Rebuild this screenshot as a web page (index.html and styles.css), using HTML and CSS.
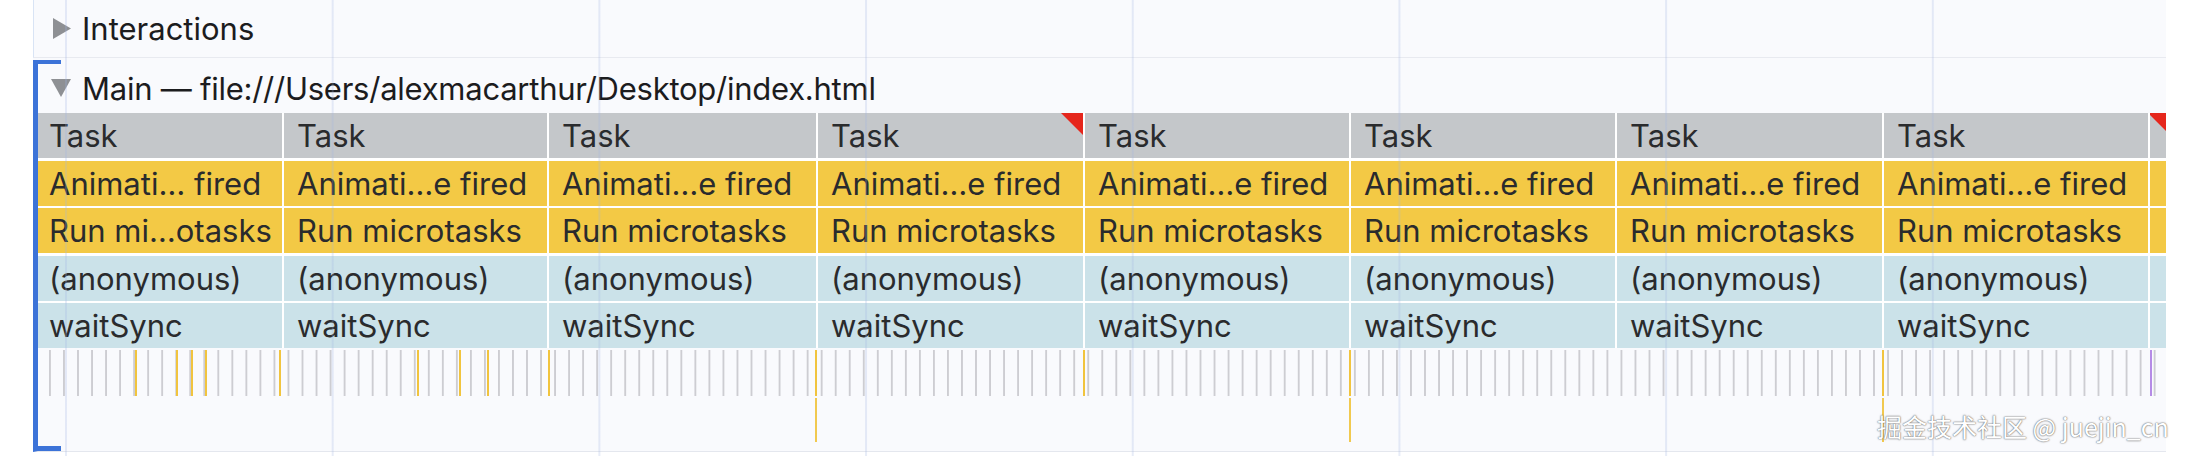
FILE: index.html
```html
<!DOCTYPE html>
<html lang="en">
<head>
    <meta charset="UTF-8">
    <title>Performance - Main thread</title>
    <link rel="stylesheet" href="styles.css">
</head>
<body>
    <div class="timeline">
        <!-- Collapsed track -->
        <div class="track-collapsed">
            <svg class="arrow" width="18" height="21" viewBox="0 0 18 21"><path d="M0 0 L18 10.5 L0 21 Z" fill="#8e9094"/></svg>
            <span class="track-title">Interactions</span>
        </div>

        <!-- Main thread track -->
        <div class="track-main">
            <div class="track-header">
                <svg class="arrow" width="20" height="18" viewBox="0 0 20 18"><path d="M0 0 L20 0 L10 18 Z" fill="#8e9094"/></svg>
                <span class="track-title url">Main — file:///Users/alexmacarthur/Desktop/index.html</span>
            </div>

            <div class="flame">
                <!-- Task row -->
                <div class="cell task first">Task</div>
                <div class="cell task">Task</div>
                <div class="cell task">Task</div>
                <div class="cell task flag">Task</div>
                <div class="cell task">Task</div>
                <div class="cell task">Task</div>
                <div class="cell task">Task</div>
                <div class="cell task">Task</div>
                <div class="cell task flag small"></div>

                <!-- Animation frame row -->
                <div class="cell anim first">Animati… fired</div>
                <div class="cell anim">Animati…e fired</div>
                <div class="cell anim">Animati…e fired</div>
                <div class="cell anim">Animati…e fired</div>
                <div class="cell anim">Animati…e fired</div>
                <div class="cell anim">Animati…e fired</div>
                <div class="cell anim">Animati…e fired</div>
                <div class="cell anim">Animati…e fired</div>
                <div class="cell anim"></div>

                <!-- Microtasks row -->
                <div class="cell anim first">Run mi…otasks</div>
                <div class="cell anim">Run microtasks</div>
                <div class="cell anim">Run microtasks</div>
                <div class="cell anim">Run microtasks</div>
                <div class="cell anim">Run microtasks</div>
                <div class="cell anim">Run microtasks</div>
                <div class="cell anim">Run microtasks</div>
                <div class="cell anim">Run microtasks</div>
                <div class="cell anim"></div>

                <!-- JS rows -->
                <div class="cell script first">(anonymous)</div>
                <div class="cell script">(anonymous)</div>
                <div class="cell script">(anonymous)</div>
                <div class="cell script">(anonymous)</div>
                <div class="cell script">(anonymous)</div>
                <div class="cell script">(anonymous)</div>
                <div class="cell script">(anonymous)</div>
                <div class="cell script">(anonymous)</div>
                <div class="cell script"></div>

                <div class="cell script first">waitSync</div>
                <div class="cell script">waitSync</div>
                <div class="cell script">waitSync</div>
                <div class="cell script">waitSync</div>
                <div class="cell script">waitSync</div>
                <div class="cell script">waitSync</div>
                <div class="cell script">waitSync</div>
                <div class="cell script">waitSync</div>
                <div class="cell script"></div>
            </div>

            <!-- Tiny tasks, yellow ones are frames -->
            <div class="ticks">
                <span class="tick" style="left: 97px"></span>
                <span class="tick" style="left: 138px"></span>
                <span class="tick" style="left: 153px"></span>
                <span class="tick" style="left: 167px"></span>
                <span class="tick" style="left: 241px"></span>
                <span class="tick" style="left: 379px"></span>
                <span class="tick" style="left: 421px"></span>
                <span class="tick" style="left: 449px"></span>
                <span class="tick" style="left: 510px"></span>
                <span class="tick" style="left: 777px"></span>
                <span class="tick" style="left: 1045px"></span>
                <span class="tick" style="left: 1311px"></span>
                <span class="tick" style="left: 1844px"></span>
                <span class="tick purple" style="left: 2112px"></span>
            </div>

            <div class="markers">
                <span class="marker" style="left: 777px"></span>
                <span class="marker" style="left: 1311px"></span>
                <span class="marker" style="left: 1844px"></span>
            </div>
        </div>
    </div>

    <div class="grid-overlay"></div>
    <div class="watermark">掘金技术社区 @ juejin_cn</div>
</body>
</html>
```

FILE: styles.css
```css
/* General Styles */
body {
    margin: 0;
    width: 2188px;
    height: 456px;
    overflow: hidden;
    position: relative;
    background-color: #ffffff;
    font-family: Inter, "Noto Sans", sans-serif;
    color: #1c1c1e;
}

/* Timeline panel */
.timeline {
    margin-left: 33px;
    width: 2133px;
    background-color: #f9fafd;
}

.track-title {
    font-size: 31px;
    white-space: nowrap;
}

.track-title.url {
    letter-spacing: -0.25px;
}

.arrow {
    flex: none;
}

/* Interactions (collapsed) */
.track-collapsed {
    height: 57px;
    display: flex;
    align-items: center;
    gap: 11px;
    padding-left: 19px;
    border-left: 1px solid #d9e4f5;
    border-bottom: 1px solid #e8eaf0;
}

/* Main thread */
.track-main {
    position: relative;
    margin-top: 2px;
    padding-bottom: 9px;
    border-left: 5px solid #3c73d8;
    border-bottom: 1px solid #e4e7ee;
}

/* Blue bracket caps */
.track-main::before,
.track-main::after {
    content: '';
    position: absolute;
    left: -5px;
    width: 28px;
    background-color: #3c73d8;
}

.track-main::before {
    top: 0;
    height: 4px;
}

.track-main::after {
    bottom: 0;
    height: 5px;
}

.track-header {
    height: 53px;
    box-sizing: border-box;
    padding: 3px 0 0 13px;
    display: flex;
    align-items: center;
    gap: 11px;
}

/* Flame chart */
.flame {
    display: grid;
    grid-template-columns: 244px 265px 269px 267px 266px 266px 267px 266px 18px;
    grid-auto-rows: 45px;
    row-gap: 2.5px;
    background-color: #ffffff;
}

.cell {
    position: relative;
    box-sizing: border-box;
    border-left: 2px solid #ffffff;
    padding-left: 13px;
    font-size: 31px;
    line-height: 46px;
    color: #2a2b2d;
    white-space: nowrap;
    overflow: hidden;
}

.cell.first {
    border-left: none;
    padding-left: 11px;
}

.task {
    background-color: #c4c7ca;
}

.anim {
    background-color: #f3c945;
}

.script {
    background-color: #cbe2e9;
}

/* Red corner for long tasks */
.flag::after {
    content: '';
    position: absolute;
    top: 0;
    right: 0;
    border-top: 22px solid #e5261c;
    border-left: 22px solid transparent;
}

.flag.small::after {
    border-top-width: 18px;
    border-left-width: 18px;
}

/* Tiny tasks strip */
.ticks {
    position: relative;
    margin-top: 2px;
    height: 46px;
    background-image: linear-gradient(90deg, #cdcdd2 0 1.5px, transparent 1.5px);
    background-size: 14.04px 100%;
    background-position: 11px 0;
}

.tick {
    position: absolute;
    top: 0;
    width: 2px;
    height: 46px;
    background-color: #f1c43e;
}

.tick.purple {
    background-color: #b58be6;
}

.markers {
    position: relative;
    margin-top: 2px;
    height: 44px;
}

.marker {
    position: absolute;
    top: 0;
    width: 1.5px;
    height: 44px;
    background-color: #f1c94f;
}

/* Faint time grid over everything */
.grid-overlay {
    position: absolute;
    top: 0;
    left: 0;
    width: 2188px;
    height: 456px;
    pointer-events: none;
    background-image: linear-gradient(90deg, rgba(160, 180, 225, 0.25) 0 1.5px, transparent 1.5px);
    background-size: 266.7px 100%;
    background-position: 65px 0;
}

/* Watermark */
.watermark {
    position: absolute;
    left: 1877px;
    top: 408px;
    font-family: "Noto Sans CJK SC", "Noto Sans", sans-serif;
    font-size: 25px;
    color: #ffffff;
    text-shadow: 0 0 2px #6b6b6b, 0 0 1px #6b6b6b;
    white-space: nowrap;
}
```
